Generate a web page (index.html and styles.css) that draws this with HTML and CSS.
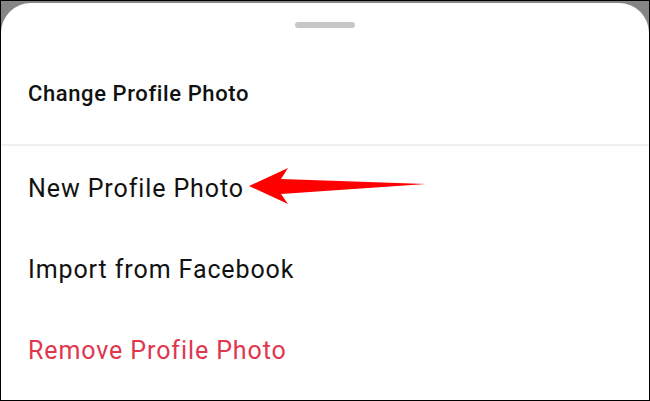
FILE: index.html
```html
<!DOCTYPE html>
<html lang="en">
<head>
<meta charset="utf-8">
<title>Change Profile Photo</title>
<link rel="stylesheet" href="styles.css">
</head>
<body>
<div class="frame">
  <div class="sheet">
    <div class="handle"></div>
    <div class="sheet-title">Change Profile Photo</div>
    <ul class="options">
      <li class="option">
        <span class="option-label">New Profile Photo</span>
        <svg class="pointer" width="182" height="42" viewBox="0 0 182 42" aria-hidden="true">
          <path d="M1 20 L40 2 L33 13 L178 18 L33 28 L40 38 Z" fill="#ff0000"/>
        </svg>
      </li>
      <li class="option">
        <span class="option-label">Import from Facebook</span>
      </li>
      <li class="option option-danger">
        <span class="option-label">Remove Profile Photo</span>
      </li>
    </ul>
  </div>
</div>
</body>
</html>
```

FILE: styles.css
```css
html, body {
  margin: 0;
  padding: 0;
}

body {
  width: 650px;
  height: 401px;
  overflow: hidden;
  font-family: Roboto, "Noto Sans", Arial, sans-serif;
}

.frame {
  box-sizing: border-box;
  width: 650px;
  height: 401px;
  border: 1px solid #000;
  background: #858585;
  display: flex;
  flex-direction: column;
}

.sheet {
  flex: 1;
  margin-top: 2px;
  background: #fff;
  border-radius: 30px 30px 0 0;
  display: flex;
  flex-direction: column;
}

.handle {
  align-self: center;
  width: 60px;
  height: 6px;
  margin-top: 19px;
  border-radius: 3px;
  background: #c7c7c7;
}

.sheet-title {
  box-sizing: border-box;
  height: 120px;
  margin-top: -2px;
  padding: 55px 27px 0;
  font-size: 22px;
  font-weight: 500;
  letter-spacing: 0.6px;
  color: #111;
  border-bottom: 2px solid #efefef;
}

.options {
  list-style: none;
  margin: 0;
  padding: 2px 0 0;
}

.option {
  height: 81px;
  display: flex;
  align-items: center;
  padding: 0 27px;
  font-size: 25px;
  letter-spacing: 0.9px;
  color: #111;
}

.option-danger {
  color: #e0364e;
}

.pointer {
  margin-left: 4px;
  margin-top: -3px;
}
```
